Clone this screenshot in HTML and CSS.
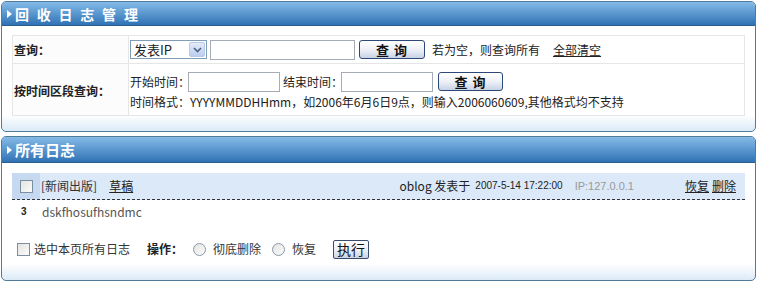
FILE: index.html
```html
<!DOCTYPE html>
<html lang="zh-CN">
<head>
<meta charset="utf-8">
<title>回收日志管理</title>
<link rel="stylesheet" href="styles.css">
</head>
<body>
<div class="panel panel-search">
  <div class="panel-head"><span class="tri"></span><span class="title spaced">回 收 日 志 管 理</span></div>
  <div class="search-grid">
    <div class="lbl row1">查询：</div>
    <div class="cell row1">
      <div class="fake-select"><span class="sel-text">发表IP</span><span class="sel-btn"><svg width="9" height="6" viewBox="0 0 9 6"><path d="M1 1 L4.5 4.5 L8 1" fill="none" stroke="#4d6185" stroke-width="1.6"/></svg></span></div>
      <input class="txt txt-key" type="text">
      <button class="btn btn-q" type="button">查 询</button>
      <span class="hint">若为空，则查询所有</span>
      <a class="link clear" href="#">全部清空</a>
    </div>
    <div class="lbl row2">按时间区段查询：</div>
    <div class="cell row2 col">
      <div class="line">
        <span class="tlbl">开始时间：</span><input class="txt txt-time" type="text">
        <span class="tlbl gap-l">结束时间：</span><input class="txt txt-time" type="text">
        <button class="btn btn-q2" type="button">查 询</button>
      </div>
      <div class="line fmt">时间格式：YYYYMMDDHHmm，如2006年6月6日9点，则输入2006060609,其他格式均不支持</div>
    </div>
  </div>
</div>

<div class="panel panel-list">
  <div class="panel-head head2"><span class="tri"></span><span class="title big">所有日志</span></div>
  <div class="item-head">
    <div class="chk-col"><input class="chk" type="checkbox"></div>
    <span class="cat">[新闻出版]</span>
    <a class="link draft" href="#">草稿</a>
    <span class="spacer"></span>
    <span class="author">oblog 发表于</span>
    <span class="date">2007-5-14 17:22:00</span>
    <span class="ip">IP:127.0.0.1</span>
    <a class="link act" href="#">恢复</a>
    <a class="link act2" href="#">删除</a>
  </div>
  <div class="item-body"><span class="num">3</span><span class="content">dskfhosufhsndmc</span></div>
  <div class="ops">
    <label class="opt"><input class="chk" type="checkbox"><span>选中本页所有日志</span></label>
    <span class="op-lbl">操作：</span>
    <label class="opt ropt"><input class="rad" type="radio" name="op"><span>彻底删除</span></label>
    <label class="opt ropt"><input class="rad" type="radio" name="op"><span>恢复</span></label>
    <button class="btn btn-run" type="button">执行</button>
  </div>
</div>
</body>
</html>
```
FILE: styles.css
```css
* { box-sizing: border-box; }
html, body { margin: 0; padding: 0; background: #fff; }
body {
  font-family: "Noto Sans CJK SC", "Noto Sans", sans-serif;
  font-size: 12px;
  line-height: 16px;
  color: #222;
  width: 758px;
  height: 282px;
  overflow: hidden;
  padding-top: 1px;
}
.panel {
  margin: 0 2px 0 1px;
  border: 1px solid #4f7c9b;
  border-radius: 5px;
  background: linear-gradient(to bottom, #fff calc(100% - 16px), #dbeaf8 100%);
  overflow: hidden;
}
.panel-search { height: 131px; }
.panel-list { height: 145px; margin-top: 4px; }
.panel-head {
  height: 24px;
  background: linear-gradient(to bottom, #84bae6 0%, #5f9bd2 45%, #2f72b3 100%);
  border-bottom: 1px solid #2a5f91;
  color: #fff;
  font-weight: bold;
  display: flex;
  align-items: center;
  padding-left: 5px;
}
.head2 { height: 26px; }
.tri {
  width: 0; height: 0;
  border-left: 5px solid #fff;
  border-top: 4px solid transparent;
  border-bottom: 4px solid transparent;
  margin-right: 3px;
}
.title { font-size: 14px; line-height: 18px; }
.spaced { letter-spacing: 2.3px; }
.big { font-size: 15px; }

.search-grid {
  margin: 9px 10px 0 10px;
  display: grid;
  grid-template-columns: 116px 1fr;
  grid-template-rows: 28px 51px;
  border: 1px solid #e6e6e6;
}
.lbl {
  font-weight: bold;
  display: flex;
  align-items: center;
  padding-left: 1px;
  background: #fcfcfc;
  border-right: 1px solid #e6e6e6;
}
.lbl.row1, .cell.row1 { border-bottom: 1px solid #e6e6e6; }
.lbl.row2 { padding-top: 2px; }
.cell {
  display: flex;
  align-items: center;
  padding-left: 1px;
}
.cell.col { flex-direction: column; align-items: flex-start; justify-content: center; padding-top: 2px; }
.line { display: flex; align-items: center; height: 20px; }
.line.fmt { margin-top: 2px; height: 16px; }
.tlbl { width: 57px; white-space: nowrap; }

.fake-select {
  width: 77px;
  height: 19px;
  border: 1px solid #7f9db9;
  display: flex;
  align-items: center;
  justify-content: space-between;
  padding: 1px;
  background: #fff;
  font-size: 13px;
}
.sel-text { padding-left: 2px; line-height: 15px; }
.sel-btn {
  width: 16px; height: 15px;
  border: 1px solid #b9c9e6;
  border-radius: 2px;
  background: linear-gradient(to bottom, #e3ebfa, #bccdf0);
  display: flex; align-items: center; justify-content: center;
}
.txt {
  height: 20px;
  border: 1px solid #a5acb5;
  background: #fff;
  padding: 0 2px;
  margin: 0;
  font: inherit;
}
.txt-key { width: 145px; margin-left: 3px; }
.txt-time { width: 92px; margin-left: 1px; }
.gap-l { margin-left: 3px; }

.btn {
  font-family: "Noto Sans CJK SC", sans-serif;
  font-weight: bold;
  font-size: 13px;
  line-height: 15px;
  color: #111;
  border: 1px solid #2c4a78;
  border-radius: 3px;
  background: linear-gradient(to bottom, #ffffff 0%, #eef1f7 50%, #c9d3e6 100%);
  padding: 0;
  margin: 0;
  cursor: pointer;
  letter-spacing: 1px;
}
.btn-q { width: 66px; height: 19px; margin-left: 4px; }
.btn-q2 { width: 65px; height: 19px; margin-left: 5px; }
.hint { margin-left: 7px; }
.link { color: #222; text-decoration: underline; }
.clear { margin-left: 13px; }

.item-head {
  margin: 10px 10px 0 10px;
  height: 27px;
  background: #dbe9f9;
  border-bottom: 1px dashed #333;
  display: flex;
  align-items: center;
}
.chk-col {
  width: 28px;
  height: 100%;
  background: #c6d9f0;
  display: flex;
  align-items: center;
  justify-content: center;
}
.chk, .rad {
  appearance: none;
  -webkit-appearance: none;
  width: 13px; height: 13px;
  margin: 0;
  border: 1px solid #7b8fa3;
  background: linear-gradient(135deg, #e4e4e0, #fbfbfb);
}
.rad { border-radius: 50%; border-color: #8799ab; }
.cat { margin-left: 1px; color: #333; }
.draft { margin-left: 12px; }
.spacer { flex: 1; }
.author { color: #222; }
.date {
  font-family: "Liberation Sans", sans-serif;
  font-size: 10px;
  margin-left: 5px;
  color: #222;
}
.ip {
  font-family: "Liberation Sans", sans-serif;
  font-size: 11px;
  color: #999;
  margin-left: 12px;
}
.act { margin-left: 51px; }
.act2 { margin-left: 3px; margin-right: 9px; }

.item-body {
  height: 26px;
  display: flex;
  align-items: center;
  padding-left: 19px;
  margin-top: -1px;
}
.num { font-family: "Liberation Sans", sans-serif; font-weight: bold; font-size: 10px; width: 21px; }
.content { color: #555; }

.ops {
  display: flex;
  align-items: center;
  height: 20px;
  margin-top: 14px;
  padding-left: 15px;
}
.opt { display: flex; align-items: center; }
.opt span { margin-left: 4px; color: #333; }
.ropt span { margin-left: 7px; }
.op-lbl { font-weight: bold; margin-left: 17px; }
.op-lbl + .opt { margin-left: 10px; }
.opt + .opt { margin-left: 11px; }
.btn-run {
  width: 36px; height: 19px;
  font-size: 14px; font-weight: normal;
  margin-left: 17px;
  border-color: #3a4d6e;
  border-radius: 2px;
  letter-spacing: 0;
}
```
